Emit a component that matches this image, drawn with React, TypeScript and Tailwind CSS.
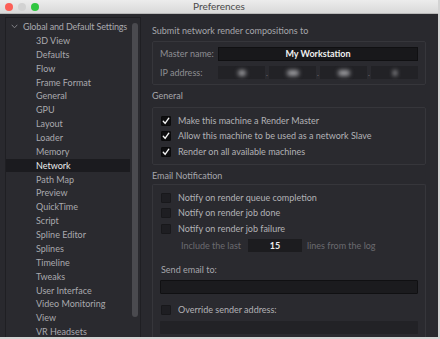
import React from "react";

const items = [
  "3D View","Defaults","Flow","Frame Format","General","GPU","Layout","Loader","Memory","Network","Path Map","Preview","QuickTime","Script","Spline Editor","Splines","Timeline","Tweaks","User Interface","Video Monitoring","View","VR Headsets",
];

function Check({ checked }: { checked: boolean }) {
  return (
    <div className={checked ? "w-[10px] h-[10px] rounded-[1px] bg-[#0e0e10] border border-[#0a0a0b] flex items-center justify-center" : "w-[10px] h-[10px] rounded-[1px] bg-[#1e1e22] border border-[#18181b]"}>
      {checked && (
        <svg width="8" height="8" viewBox="0 0 8 8">
          <path d="M1.3 4.3 L3.1 6.4 L6.8 1.2" stroke="#f2f2f2" strokeWidth="1.4" fill="none" strokeLinecap="round" strokeLinejoin="round" />
        </svg>
      )}
    </div>
  );
}

function CheckRow({ checked, label }: { checked: boolean; label: string }) {
  return (
    <div className="flex items-center h-[15.5px] pl-[8px]">
      <Check checked={checked} />
      <span className="ml-[7px] text-[#b2b2b6] leading-[12px]">{label}</span>
    </div>
  );
}

function Blur({ w }: { w: number }) {
  return <div className="h-[6px] rounded-full bg-[#9a9a9e] blur-[2px]" style={{ width: w }} />;
}

export default function App() {
  return (
    <div className="w-[440px] h-[339px] bg-[#d4d4d4] overflow-hidden" style={{ fontFamily: "Lato, 'Open Sans', sans-serif" }}>
      <div className="w-[438px] h-[337px] bg-[#29292e] flex flex-col text-[9px]">
        <div className="h-[14px] flex items-center relative bg-gradient-to-b from-[#ececec] to-[#d9d9d9] border-b border-[#b8b8b8]">
          <div className="flex gap-[5px] pl-[5px]">
            <div className="w-[8px] h-[8px] rounded-full bg-[#fc5f57]" />
            <div className="w-[8px] h-[8px] rounded-full bg-[#d2d2d2]" />
            <div className="w-[8px] h-[8px] rounded-full bg-[#2fc640]" />
          </div>
          <div className="absolute inset-0 flex items-center justify-center text-[10px] text-[#4a4a4a]">Preferences</div>
        </div>
        <div className="flex flex-1 min-h-0">
          <div className="ml-[5px] mt-[3px] w-[136px] border border-[#1f1f23] border-b-0 bg-[#2a2a2f] flex relative">
            <div className="flex-1 pt-[2px]">
              <div className="h-[13.86px] flex items-center text-[#a9a9ae] tracking-[-0.15px]">
                <svg width="7" height="5" viewBox="0 0 7 5" className="ml-[5px] mr-[5px]">
                  <path d="M0.7 0.8 L3.5 3.8 L6.3 0.8" stroke="#8a8a8f" strokeWidth="0.9" fill="none" />
                </svg>
                Global and Default Settings
              </div>
              {items.map((it) => (
                <div key={it} className={it === "Network" ? "h-[13.86px] flex items-center pl-[30px] bg-[#1b1b1f] text-[#ededed] mr-[10px]" : "h-[13.86px] flex items-center pl-[30px] text-[#a9a9ae]"}>
                  {it}
                </div>
              ))}
            </div>
            <div className="absolute right-[2px] top-[5px] w-[6px] h-[294px] rounded-[3px] bg-[#4a4a4f]" />
          </div>
          <div className="flex-1 pl-[11px] pr-[12px] pt-[10px] flex flex-col">
            <div className="h-[14px] flex items-center text-[#a6a6ab]">Submit network render compositions to</div>
            <div className="mt-[3px] h-[44px] border border-[#36363b] rounded-[2px] bg-[#2a2a2f] px-[7px] pt-[5px]">
              <div className="flex items-center h-[14px]">
                <span className="w-[58px] text-[#8e8e93]">Master name:</span>
                <div className="flex-1 h-[14px] bg-[#18181b] border border-[#101012] flex items-center justify-center text-[#f0f0f0] font-bold">My Workstation</div>
              </div>
              <div className="flex items-center h-[13px] mt-[5px]">
                <span className="w-[58px] text-[#8e8e93]">IP address:</span>
                <div className="flex-1 flex items-center">
                  <div className="w-[47px] h-[13px] bg-[#222226] flex items-center justify-center"><Blur w={8} /></div>
                  <span className="w-[4px] text-center text-[#777] text-[8px]">.</span>
                  <div className="w-[47px] h-[13px] bg-[#222226] flex items-center justify-center"><Blur w={12} /></div>
                  <span className="w-[4px] text-center text-[#777] text-[8px]">.</span>
                  <div className="w-[47px] h-[13px] bg-[#222226] flex items-center justify-center"><Blur w={12} /></div>
                  <span className="w-[4px] text-center text-[#777] text-[8px]">.</span>
                  <div className="flex-1 h-[13px] bg-[#222226] flex items-center justify-center"><Blur w={4} /></div>
                </div>
              </div>
            </div>
            <div className="h-[14px] mt-[4px] flex items-center text-[#a6a6ab]">General</div>
            <div className="mt-[4px] h-[58px] border border-[#36363b] rounded-[2px] bg-[#2a2a2f] pt-[5px]">
              <CheckRow checked label="Make this machine a Render Master" />
              <CheckRow checked label="Allow this machine to be used as a network Slave" />
              <CheckRow checked label="Render on all available machines" />
            </div>
            <div className="h-[14px] mt-[4px] flex items-center text-[#a6a6ab]">Email Notification</div>
            <div className="mt-[1px] flex-1 border border-[#36363b] border-b-0 rounded-t-[2px] bg-[#2a2a2f] pt-[5px]">
              <CheckRow checked={false} label="Notify on render queue completion" />
              <CheckRow checked={false} label="Notify on render job done" />
              <CheckRow checked={false} label="Notify on render job failure" />
              <div className="flex items-center h-[14px] mt-[2px] pl-[28px]">
                <span className="text-[#6a6a6f]">Include the last</span>
                <div className="ml-[7px] w-[54px] h-[13px] bg-[#1c1c1f] flex items-center justify-center text-[#ededed] font-bold">15</div>
                <span className="ml-[5px] text-[#6a6a6f]">lines from the log</span>
              </div>
              <div className="h-[14px] mt-[10px] flex items-center pl-[8px] text-[#a6a6ab]">Send email to:</div>
              <div className="mx-[7px] mt-[3px] h-[14px] bg-[#1b1b1e] border border-[#101012] rounded-[1px]" />
              <div className="mt-[9px]">
                <CheckRow checked={false} label="Override sender address:" />
              </div>
              <div className="mx-[7px] mt-[3px] h-[13px] bg-[#222226] rounded-[1px]" />
            </div>
          </div>
        </div>
      </div>
    </div>
  );
}
